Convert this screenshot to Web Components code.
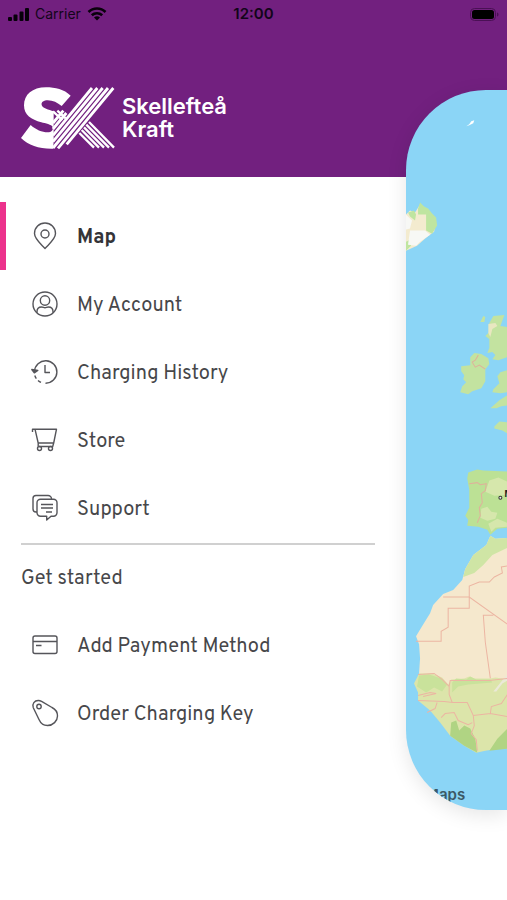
<!DOCTYPE html>
<html lang="en">
<head>
<meta charset="utf-8">
<meta name="viewport" content="width=device-width, initial-scale=1">
<title>Skellefteå Kraft</title>
<style>
  body {
    margin: 0;
    background: #fff;
    font-family: Overpass, Roboto, sans-serif;
  }
</style>
</head>
<body>
<side-menu-app>
  <status-bar slot="status" carrier="Carrier" time="12:00"></status-bar>
  <brand-logo slot="brand">Skellefteå<br>Kraft</brand-logo>
  <menu-item icon="pin" active>Map</menu-item>
  <menu-item icon="account">My Account</menu-item>
  <menu-item icon="history">Charging History</menu-item>
  <menu-item icon="cart">Store</menu-item>
  <menu-item icon="support">Support</menu-item>
  <menu-heading>Get started</menu-heading>
  <menu-item icon="card">Add Payment Method</menu-item>
  <menu-item icon="tag">Order Charging Key</menu-item>
  <map-card slot="map"></map-card>
</side-menu-app>

<script>
const icons = {
  pin: '<path d="M14 26.500C10 22 3.500 17 3.500 11.500a10.500 10.500 0 0 1 21 0C24.500 17 18 22 14 26.500z"/><circle cx="14" cy="12" r="4"/>',
  account: '<circle cx="14" cy="14" r="12"/><circle cx="14" cy="10.500" r="4.700"/><path d="M6 22.800v-1c0-3 2-4.800 4.500-4.800 2 0 2 .7 3.500.7s1.500-.7 3.500-.7c2.500 0 4.500 1.800 4.500 4.800v1"/>',
  history: '<path d="M3.500 13.500A11.200 11.200 0 1 1 14.500 25.200"/><path d="M3.800 17.500A11.200 11.200 0 0 0 11.500 25" stroke-dasharray="3.500 2.500"/><path d="M.8 11.500l2.500 3.300 3.500-2.300z" fill="currentColor"/><path d="M14 7v7.500h5"/>',
  cart: '<path d="M1.500 6V3.200h24L22.700 17H7.200L4 3.200M7.200 17v3.500M22.700 17l-1 3.500H8"/><circle cx="8.500" cy="22.500" r="2"/><circle cx="19.500" cy="22.500" r="2"/>',
  support: '<path d="M6 18H5a3 3 0 0 1-3-3V4.500a3 3 0 0 1 3-3h12a3.500 3.500 0 0 1 3.500 3.500"/><path d="M9.500 5.200h13a3.500 3.500 0 0 1 3.500 3.500v10a3.500 3.500 0 0 1-3.500 3.500H20L15.700 26v-3.800H9.500A3.500 3.500 0 0 1 6 18.700v-10a3.500 3.500 0 0 1 3.500-3.500z"/><path d="M10 10.500h12M10 14h12M15 18h6"/>',
  card: '<rect x="2" y="5" width="24" height="17.500" rx="2"/><path d="M2 10.500h24M5 14.500h5.500"/>',
  tag: '<path d="M7.500 1.500C3.500 1.300.8 5 2.300 8.700L8 20.500c1.500 3.500 4.500 6 8.500 6 5.500 0 10-4.500 10-9.500 0-4-2.500-7-5.500-8.500L11 2.700C9.800 2.100 9 1.600 7.500 1.500z"/><circle cx="8" cy="7.500" r="2.200"/>'
};

class SideMenuApp extends HTMLElement {
  constructor() {
    super();
    this.attachShadow({ mode: 'open' });
    this.shadowRoot.innerHTML = `
      <style>
        :host {
          display: grid;
          grid-template-columns: 4fr 1fr;
          grid-template-rows: auto 1fr;
          min-height: 100vh;
          overflow: hidden;
        }
        header {
          grid-area: 1 / 1 / 2 / 3;
          background: #72207f;
        }
        .brand {
          padding: 58px 20px 28px;
        }
        nav {
          grid-area: 2 / 1 / 3 / 2;
          padding: 25px 0;
        }
        slot[name="map"] {
          display: grid;
          grid-area: 1 / 2 / 3 / 3;
          align-items: center;
        }
      </style>
      <header>
        <slot name="status"></slot>
        <div class="brand"><slot name="brand"></slot></div>
      </header>
      <nav aria-label="Main"><slot></slot></nav>
      <slot name="map"></slot>
    `;
  }
}
customElements.define('side-menu-app', SideMenuApp);

class StatusBar extends HTMLElement {
  constructor() {
    super();
    this.attachShadow({ mode: 'open' });
  }

  connectedCallback() {
    this.shadowRoot.innerHTML = `
      <style>
        :host {
          display: grid;
          grid-template-columns: 1fr auto 1fr;
          align-items: center;
          height: 28px;
          padding: 0 8px;
          color: #13051a;
          font: 14px/28px Inter, sans-serif;
        }
        .network {
          display: flex;
          align-items: center;
          gap: 6px;
        }
        time {
          font-size: 15px;
          font-weight: 600;
        }
        .battery { justify-self: end; }
        svg { display: block; }
      </style>
      <div class="network">
        <svg width="21" height="13" viewBox="0 0 21 13" fill="#08010b">
          <rect y="9" width="4" height="4" rx="1"/>
          <rect x="5.500" y="6.500" width="4" height="6.500" rx="1"/>
          <rect x="11.500" y="3.500" width="4" height="9.500" rx="1"/>
          <rect x="17" width="4" height="13" rx="1"/>
        </svg>
        <span>${this.getAttribute('carrier')}</span>
        <svg width="20" height="14" viewBox="0 0 20 14" fill="none" stroke="#08010b" stroke-width="2.600">
          <path d="M1.500 5a12 12 0 0 1 17 0M4.800 8.300a7.500 7.500 0 0 1 10.400 0"/>
          <path d="M7 10.500a4.500 4.500 0 0 1 6 0l-3 3z" fill="#08010b" stroke="none"/>
        </svg>
      </div>
      <time>${this.getAttribute('time')}</time>
      <svg class="battery" width="29" height="13" viewBox="0 0 29 13">
        <rect x=".5" y=".5" width="25" height="12" rx="4" fill="none" stroke="#4a1055"/>
        <rect x="2" y="2" width="22" height="9" rx="2.500"/>
        <path d="M27 4.500c2 .5 2 3.500 0 4z" fill="#4a1055"/>
      </svg>
    `;
  }
}
customElements.define('status-bar', StatusBar);

class BrandLogo extends HTMLElement {
  constructor() {
    super();
    this.attachShadow({ mode: 'open' });
    this.shadowRoot.innerHTML = `
      <style>
        :host {
          display: flex;
          align-items: center;
          gap: 6px;
          color: #fff;
          font: 600 22px/23px Inter, sans-serif;
        }
      </style>
      <svg width="96" height="63" viewBox="6 12 288 189" fill="none" stroke="#fff" aria-hidden="true">
        <path fill="#fff" stroke="none" d="M158 41C138 22 112 16 84 16 43 16 18 38 18 70c0 30 22 43 52 51 12 3 31 7 34 14 3 9-4 16-15 16-17 0-36-8-51-22L9 168c23 22 55 33 96 32l2-20V88C92 82 74 80 71 69c-2-9 7-14 18-14 16 0 29 7 42 17z"/>
        <path stroke-width="8.500" d="M286 18L146 187M270 18L120 199M254 18L105 198M238 18L105 179M222 18L105 160M145 93L105 141M136 86L105 123"/>
        <path stroke-width="7" d="M105 88l28 26M118 86l25 23M184 153l44 44M191 144l52 53M198 136l60 61M205 128l68 69M213 120l75 77"/>
      </svg>
      <span><slot></slot></span>
    `;
  }
}
customElements.define('brand-logo', BrandLogo);

class MenuItem extends HTMLElement {
  constructor() {
    super();
    this.attachShadow({ mode: 'open' });
  }

  connectedCallback() {
    const current = this.hasAttribute('active') ? 'aria-current="page"' : '';

    this.shadowRoot.innerHTML = `
      <style>
        :host { display: block; }
        a {
          display: flex;
          align-items: center;
          gap: 18px;
          height: 68px;
          padding-left: 25px;
          border-left: 6px solid transparent;
          color: #47474a;
          font-size: 20px;
          line-height: 28px;
          text-decoration: none;
        }
        :host([active]) a {
          border-color: #ec328c;
          color: #343438;
          font-weight: 700;
        }
        svg {
          flex: none;
          color: #55555a;
        }
        span { padding-top: 4px; }
      </style>
      <a href="#" ${current}>
        <svg width="28" height="28" viewBox="0 0 28 28" fill="none" stroke="currentColor" stroke-width="1.400" stroke-linejoin="round" aria-hidden="true">${icons[this.getAttribute('icon')]}</svg>
        <span><slot></slot></span>
      </a>
    `;
  }
}
customElements.define('menu-item', MenuItem);

class MenuHeading extends HTMLElement {
  constructor() {
    super();
    this.attachShadow({ mode: 'open' });
    this.shadowRoot.innerHTML = `
      <style>
        :host {
          display: block;
          margin: 1px 31px 0 21px;
          border-top: 2px solid #d0d0d0;
        }
        h2 {
          margin: 0;
          padding: 20px 0 18px;
          color: #47474a;
          font-size: 20px;
          font-weight: 400;
          line-height: 28px;
        }
      </style>
      <h2><slot></slot></h2>
    `;
  }
}
customElements.define('menu-heading', MenuHeading);

class MapCard extends HTMLElement {
  constructor() {
    super();
    this.attachShadow({ mode: 'open' });
    this.shadowRoot.innerHTML = `
      <style>
        :host {
          display: block;
          height: 80vh;
          overflow: hidden;
          border-radius: 80px 0 0 80px;
          background: #8bd5f6;
          box-shadow: 0 5px 20px rgba(0, 0, 0, .1);
        }
        svg {
          display: block;
          width: 100%;
          height: 100%;
        }
        text { font-family: Inter, sans-serif; }
      </style>
      <svg viewBox="406 91 101 719" preserveAspectRatio="xMinYMid slice" role="img" aria-label="Map">
        <path fill="#fff" d="M466 128l3-2 2-3 3-1-1 3-4 2z"/>

        <!-- Iceland -->
        <path fill="#f3ebcf" d="M406 216l4-4 5 2 5-8 8 5 8 12-2 10-8 6-9 8-11 5z"/>
        <path fill="#bfe5a0" d="M408 214l6-2 2 4-1 6-5-4zM418 210l2-6 4 4 4 2 4 5 4 4 1 8-5 8-6-3 0-16-8 0zM406 243l4-2 1 6-5 5z"/>
        <path fill="#f7f8f5" d="M406 216l6 6-2 8-4 1zM410 232h15l5 4-10 7-4 4-8-1z"/>

        <!-- British Isles and Brittany -->
        <g fill="#c3e3a0">
          <path d="M480 323l3-6 2 1-1 5zM504 316l-11 1-4 7 0 9-4 4 4 3 0 9-2 5 5-1 3 3-3 4 6 1 9-3V328l-7-1z"/>
          <path d="M470 358l4-4 7 1 7 4 1 6-4 5 0 12-4 7-9 3-4 3-8-2 2-6 4-4-3-3 1-4-3-4 0-5 9-1z"/>
          <path d="M507 371l-7 2-3 4 2 7-6 6-1 3 8 1 7-1zM507 396l-8 5-9 8 6 0 5-2 6-1zM494 427l5-5 8 1v11l-5-3-8-2z"/>
        </g>
        <path fill="#e9e7c0" d="M488 325l7-1 2 3-5 3-2 8-2-4z"/>
        <path fill="none" stroke="#dfb19a" d="M478 356l-3 5-3 2 3 5 4-2 6 4"/>

        <!-- Iberia -->
        <path fill="#bce195" d="M507 472l-24-1-6-1-9 3-1 6 2 11 0 18-4 8 3 4-1 6 11 1 9 3 3 5 7-6 10-1z"/>
        <path fill="#d6e7ac" d="M489 481l9-3 9 4v13l-13 1-9-4zM481 509l6-2 4 5 6 1-2 6-8 2-7-3zM488 524l9-5 10 4v4l-12 1-4 4z"/>
        <path fill="none" stroke="#dfb19a" d="M469 484l8-1 3 2 6-1-1 7-4 3 1 9-3 5 1 8-3 7"/>
        <circle cx="500" cy="498" r="1.500" fill="#eee" stroke="#333"/>
        <text x="504" y="497" font-size="9" font-weight="700" fill="#222">M</text>

        <!-- Northwest Africa -->
        <path fill="#f5e8cd" d="M507 538l-12 1-5-3-4 9-13 10-8 14-3 11-9 10-10 4-10 11-3 8-8 13-6 10 3 8 1 14-1 15V690h88z"/>
        <path fill="#cfe5a5" d="M507 538l-12 1-5-3-4 9-13 10-8 14-2 8 11-4 9-8 9-10 15-7z"/>
        <path fill="#dce5aa" d="M419 673h13l10 4 6 7 3-5 13-1 5-2 5 2h16l5-1 12 2V748h-10l-12 2-9 2-12-7-14-10-10-13-10-12-12-10v-8l-4-9z"/>
        <path fill="#c9e29b" d="M419 675l10-1 12 4 6 6-5 7-8-4-8 5-9-6zM452 682l4-4 10 1 4-3 6 3h14l2 3-24 2-10 2-6 6z"/>
        <path fill="#b0d483" d="M451 722l5-2 3 10 5-5 6 3 5 10 2 14-13-7-14-10zM507 728l-10 10-8 12 18-2z"/>
        <path fill="#ebe9d8" d="M507 674l-6 7-8 10 3 0 6-8 5-3z"/>
        <path fill="none" stroke="#ecb5a2" d="M507 566l-6 1 1 6-8 4-5 5-10 0-10 4 0 22-21 0 0 19-7 4 0 10-25 0M443 597l26 0 38 27M493 615l-10 0 2 27 5 36M418 674l16-1 8 6 7 7 1-6 39 0 18-2M449 686l0 8 3 8-8-1-26-1M418 695l12-3 6 1-13 3M452 702l15 0 6 13 17-2 1-7 10-3 6-9M473 715l1 10-3 8 5 6 1 11M490 713l17 3M441 717l4-4 9-1 4 8 10 4 4-2M437 702l-2 6-8 4"/>
        <text x="425" y="799" font-size="15" font-weight="600" fill="#3c5966">Maps</text>
      </svg>
    `;
  }
}
customElements.define('map-card', MapCard);
</script>
</body>
</html>
